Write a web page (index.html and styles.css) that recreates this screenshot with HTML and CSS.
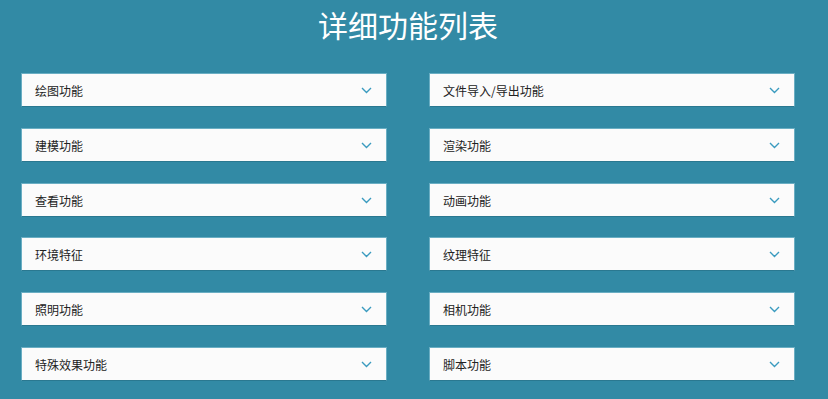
FILE: index.html
```html
<!DOCTYPE html>
<html>
<head>
<title>详细功能列表</title>
<meta charset="UTF-8">
<link rel="stylesheet" href="styles.css">
</head>
<body>
<div class="page">
  <h1 class="title">详细功能列表</h1>
  <div class="list">
    <div class="item"><span>绘图功能</span><svg class="chev" width="11" height="7" viewBox="0 0 11 7"><path d="M1 1l4.5 4.5L10 1" fill="none" stroke="#3a9bbf" stroke-width="1.4"/></svg></div>
    <div class="item"><span>文件导入/导出功能</span><svg class="chev" width="11" height="7" viewBox="0 0 11 7"><path d="M1 1l4.5 4.5L10 1" fill="none" stroke="#3a9bbf" stroke-width="1.4"/></svg></div>
    <div class="item"><span>建模功能</span><svg class="chev" width="11" height="7" viewBox="0 0 11 7"><path d="M1 1l4.5 4.5L10 1" fill="none" stroke="#3a9bbf" stroke-width="1.4"/></svg></div>
    <div class="item"><span>渲染功能</span><svg class="chev" width="11" height="7" viewBox="0 0 11 7"><path d="M1 1l4.5 4.5L10 1" fill="none" stroke="#3a9bbf" stroke-width="1.4"/></svg></div>
    <div class="item"><span>查看功能</span><svg class="chev" width="11" height="7" viewBox="0 0 11 7"><path d="M1 1l4.5 4.5L10 1" fill="none" stroke="#3a9bbf" stroke-width="1.4"/></svg></div>
    <div class="item"><span>动画功能</span><svg class="chev" width="11" height="7" viewBox="0 0 11 7"><path d="M1 1l4.5 4.5L10 1" fill="none" stroke="#3a9bbf" stroke-width="1.4"/></svg></div>
    <div class="item"><span>环境特征</span><svg class="chev" width="11" height="7" viewBox="0 0 11 7"><path d="M1 1l4.5 4.5L10 1" fill="none" stroke="#3a9bbf" stroke-width="1.4"/></svg></div>
    <div class="item"><span>纹理特征</span><svg class="chev" width="11" height="7" viewBox="0 0 11 7"><path d="M1 1l4.5 4.5L10 1" fill="none" stroke="#3a9bbf" stroke-width="1.4"/></svg></div>
    <div class="item"><span>照明功能</span><svg class="chev" width="11" height="7" viewBox="0 0 11 7"><path d="M1 1l4.5 4.5L10 1" fill="none" stroke="#3a9bbf" stroke-width="1.4"/></svg></div>
    <div class="item"><span>相机功能</span><svg class="chev" width="11" height="7" viewBox="0 0 11 7"><path d="M1 1l4.5 4.5L10 1" fill="none" stroke="#3a9bbf" stroke-width="1.4"/></svg></div>
    <div class="item"><span>特殊效果功能</span><svg class="chev" width="11" height="7" viewBox="0 0 11 7"><path d="M1 1l4.5 4.5L10 1" fill="none" stroke="#3a9bbf" stroke-width="1.4"/></svg></div>
    <div class="item"><span>脚本功能</span><svg class="chev" width="11" height="7" viewBox="0 0 11 7"><path d="M1 1l4.5 4.5L10 1" fill="none" stroke="#3a9bbf" stroke-width="1.4"/></svg></div>
  </div>
</div>
</body>
</html>
```

FILE: styles.css
```css
html, body {
  margin: 0px;
  padding: 0px;
  height: 100%;
  background-color: rgb(50,138,165);
  font-family: "Noto Sans CJK SC", "Noto Sans", sans-serif;
}

.page {
  width: 774px;
  padding-left: 21px;
}

.title {
  margin: 0;
  height: 73px;
  padding-top: 2px;
  box-sizing: border-box;
  text-align: center;
  color: #ffffff;
  font-size: 30px;
  font-weight: normal;
  line-height: 44px;
}

.list {
  display: grid;
  grid-template-columns: 366px 366px;
  column-gap: 42px;
  row-gap: 20.8px;
}

.item {
  height: 34px;
  box-sizing: border-box;
  background: #fbfbfb;
  border: 1px solid #6aaec3;
  border-bottom-color: #2a7890;
  display: flex;
  align-items: center;
  justify-content: space-between;
  padding: 0 14px 0 13px;
  font-size: 12px;
  color: #222222;
}

.item span {
  margin-top: 1px;
}

.chev {
  display: block;
  margin-top: 1px;
}
```
